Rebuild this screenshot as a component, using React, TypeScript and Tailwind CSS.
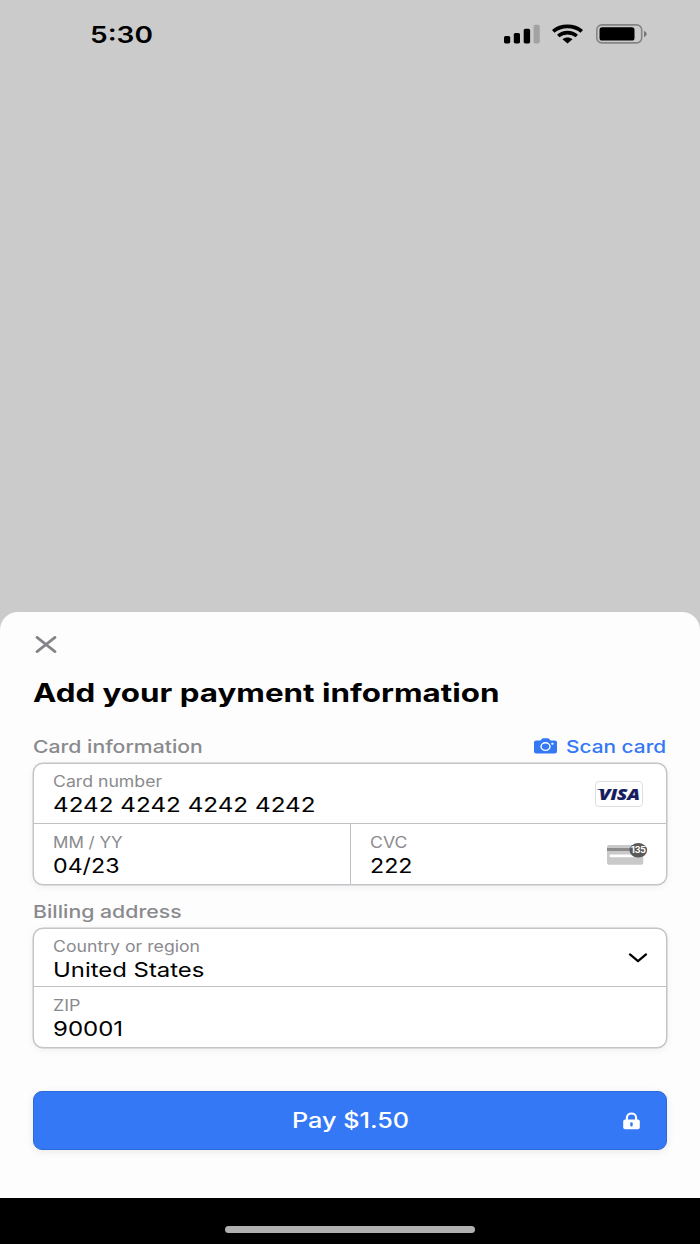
import clsx from "clsx";
import type { ReactNode } from "react";

// Wide lettering: every text is set in Inter and stretched from its left edge.
function Wide({ className, children }: { className?: string; children: ReactNode }) {
  return (
    <span className={clsx("inline-block origin-left whitespace-nowrap", className)}>{children}</span>
  );
}

function SignalIcon() {
  return (
    <svg width="36" height="20" viewBox="0 0 36 20">
      <rect x="0" y="12" width="6.2" height="7.4" rx="1.6" />
      <rect x="9.8" y="9" width="6.2" height="10.4" rx="1.6" />
      <rect x="19.7" y="4.8" width="6.4" height="14.6" rx="1.6" />
      <rect x="29.6" y="0.8" width="6.2" height="18.6" rx="1.6" fill="#a2a2a2" />
    </svg>
  );
}

function WifiIcon() {
  return (
    <svg width="31" height="20" viewBox="0 0 31 20" fill="none" stroke="#000">
      <path d="M1.2 7.4C9 .7 22 .7 29.8 7.4" strokeWidth="3.8" />
      <path d="M6.2 12c5.3-4.5 13.3-4.5 18.6 0" strokeWidth="3.6" />
      <path d="M15.5 19.4l-5-4.1c2.9-2.3 7.1-2.3 10 0z" fill="#000" stroke="none" />
    </svg>
  );
}

function BatteryIcon() {
  return (
    <svg width="51" height="20" viewBox="0 0 51 20">
      <rect x="0.8" y="0.9" width="44.9" height="18" rx="5" fill="none" stroke="#858585" strokeWidth="1.6" />
      <rect x="3.5" y="3.3" width="35" height="13.2" rx="2.6" />
      <path d="M48 7c3.5 0.8 3.5 5.2 0 6z" fill="#777" />
    </svg>
  );
}

function CameraIcon() {
  return (
    <svg width="23" height="16" viewBox="0 0 23 16">
      <path
        d="M2.4 2.5h4L8 0.8C8.3 0.5 8.7 0.3 9.2 0.3H13.8C14.3 0.3 14.7 0.5 15 0.8L16.6 2.5H20.6C22 2.5 23 3.2 23 4.4V13.4C23 14.6 22 15.4 20.6 15.4H2.4C1 15.4 0 14.6 0 13.4V4.4C0 3.2 1 2.5 2.4 2.5z"
        fill="#3478f6"
      />
      <ellipse cx="11.5" cy="8.6" rx="4.5" ry="3.8" fill="none" stroke="#fff" strokeWidth="1.4" />
      <ellipse cx="18.4" cy="5.8" rx="1.2" ry="1" fill="#fff" />
    </svg>
  );
}

function VisaLogo() {
  return (
    <svg width="48" height="26" viewBox="0 0 48 26">
      <rect x="0.5" y="0.5" width="47" height="25" rx="3.5" fill="#fff" stroke="#dedee2" />
      <path d="M2.4 8.1h5.2l1.2 1.9-.7 1.8C7 9.8 5 8.8 2.4 8.500z" fill="#171c61" />
      <text
        x="4"
        y="18.8"
        fill="#171c61"
        stroke="#171c61"
        strokeWidth="0.2"
        fontFamily="Open Sans, sans-serif"
        fontSize="15"
        fontWeight="800"
        fontStyle="italic"
        textLength="41"
        lengthAdjust="spacingAndGlyphs"
      >
        VISA
      </text>
    </svg>
  );
}

function CvcIcon() {
  return (
    <svg width="41" height="24" viewBox="0 0 41 24">
      <rect x="0" y="3" width="36.3" height="19.8" rx="2" fill="#c9c9c9" />
      <rect x="0" y="6" width="36.3" height="3" fill="#8c8c8c" />
      <rect x="2.6" y="12.4" width="24" height="2.8" rx="0.6" fill="#fff" />
      <ellipse cx="31.3" cy="8.3" rx="8.8" ry="7.2" fill="#5a5a5a" />
      <text
        x="23.9"
        y="11.3"
        fill="#fff"
        fontFamily="Inter, sans-serif"
        fontSize="8.3"
        fontWeight="700"
        textLength="15"
        lengthAdjust="spacingAndGlyphs"
      >
        135
      </text>
    </svg>
  );
}

function Field({
  label,
  labelScale,
  value,
  valueScale,
  icon,
  className,
}: {
  label: string;
  labelScale: string;
  value: string;
  valueScale: string;
  icon?: ReactNode;
  className?: string;
}) {
  return (
    <div className={clsx("flex items-center justify-between pl-[19px]", className)}>
      <div className="flex flex-col items-start">
        <Wide className={clsx("text-[15.5px] leading-[23px] text-[#8a8a8e]", labelScale)}>{label}</Wide>
        <Wide className={clsx("text-[20px] leading-6 text-black", valueScale)}>{value}</Wide>
      </div>
      {icon}
    </div>
  );
}

export default function App() {
  return (
    <div className="flex h-[1244px] w-[700px] flex-col overflow-hidden bg-[#cbcbcb] font-['Inter',sans-serif]">
      <div className="flex h-[612px] shrink-0 items-start justify-between pt-6 pr-[53px] pl-[90px]">
        <Wide className="scale-x-[1.22] text-[23px] leading-[22px] font-semibold">5:30</Wide>
        <div className="flex items-start">
          <SignalIcon />
          <div className="ml-3">
            <WifiIcon />
          </div>
          <div className="ml-[13px]">
            <BatteryIcon />
          </div>
        </div>
      </div>

      <main className="flex h-[586px] shrink-0 flex-col rounded-t-[18px] bg-[#fdfdfd] px-[33px]">
        <button className="mt-6 ml-0.5 h-[17px] w-[22px]" aria-label="Close">
          <svg width="22" height="17" viewBox="0 0 22 17" stroke="#848488" strokeWidth="2.7" strokeLinecap="round">
            <path d="M2 1.400l18 14.200M20 1.400L2 15.600" />
          </svg>
        </button>

        <h1 className="mt-6 h-8">
          <Wide className="scale-x-[1.253] text-[25px] leading-8 font-bold text-black">Add your payment information</Wide>
        </h1>

        <div className="mt-[26px] flex h-6 items-center justify-between">
          <Wide className="scale-x-[1.21] text-[17.5px] leading-6 font-medium text-[#8a8a8e]">Card information</Wide>
          <button className="flex w-[133px] items-center gap-[9px]">
            <div className="pb-0.5">
              <CameraIcon />
            </div>
            <Wide className="scale-x-[1.19] text-[17.5px] leading-6 font-medium text-[#3478f6]">Scan card</Wide>
          </button>
        </div>

        <section className="mt-1 flex h-[122px] flex-col rounded-[10px] border border-[#c4c4c8] bg-white shadow-[0_0_0_0.5px_#c4c4c8,0_2px_8px_rgba(0,0,0,0.06)]">
          <div className="grid h-[60px] border-b border-[#c0c0c5]">
            <Field
              label="Card number"
              labelScale="scale-x-[1.14]"
              value="4242 4242 4242 4242"
              valueScale="scale-x-[1.212]"
              icon={
                <div className="pt-px">
                  <VisaLogo />
                </div>
              }
              className="pr-[23px]"
            />
          </div>
          <div className="grid flex-1 grid-cols-[317px_1fr]">
            <Field
              label="MM / YY"
              labelScale="scale-x-[1.1]"
              value="04/23"
              valueScale="scale-x-[1.16]"
              className="border-r border-[#c0c0c5]"
            />
            <Field
              label="CVC"
              labelScale="scale-x-[1.14]"
              value="222"
              valueScale="scale-x-[1.16]"
              icon={<CvcIcon />}
              className="pr-[18px]"
            />
          </div>
        </section>

        <div className="mt-[15px] flex h-6 items-center">
          <Wide className="scale-x-[1.215] text-[17.5px] leading-6 font-medium text-[#8a8a8e]">Billing address</Wide>
        </div>

        <section className="mt-1 flex h-[120px] flex-col rounded-[10px] border border-[#c4c4c8] bg-white shadow-[0_0_0_0.5px_#c4c4c8,0_2px_8px_rgba(0,0,0,0.06)]">
          <div className="grid h-[58px] border-b border-[#c0c0c5] pt-px">
            <Field
              label="Country or region"
              labelScale="scale-x-[1.14]"
              value="United States"
              valueScale="scale-x-[1.195]"
              icon={
                <svg width="20" height="10" viewBox="0 0 20 10" fill="none" stroke="#000" strokeWidth="2.2">
                  <path d="M2 1.400l8 6.800 8-6.800" strokeLinecap="round" strokeLinejoin="round" />
                </svg>
              }
              className="pr-[18px]"
            />
          </div>
          <div className="grid flex-1">
            <Field label="ZIP" labelScale="scale-x-[1.15]" value="90001" valueScale="scale-x-[1.2]" />
          </div>
        </section>

        <button className="mt-[43px] flex h-[59px] items-center justify-between rounded-[9px] border border-[#2d6ad9] bg-[#3478f6] pr-[26px] pl-[258px] shadow-[0_2px_8px_rgba(0,0,0,0.08)]">
          <Wide className="scale-x-[1.2] text-[21px] leading-6 font-medium text-white">Pay $1.50</Wide>
          <svg width="17" height="18" viewBox="0 0 17 18">
            <path d="M3.9 8V5.6c0-5.5 9.2-5.5 9.2 0V8" fill="none" stroke="#fff" strokeWidth="2.1" />
            <rect x="0.2" y="7.5" width="16.6" height="9.8" rx="2" fill="#fff" />
            <rect x="7.3" y="10.2" width="2.4" height="4.2" rx="1" fill="#3478f6" />
          </svg>
        </button>
      </main>

      <footer className="flex flex-1 items-start justify-center bg-black pt-7">
        <div className="h-[7px] w-[250px] rounded-full bg-[#b0b0b0]" />
      </footer>
    </div>
  );
}
